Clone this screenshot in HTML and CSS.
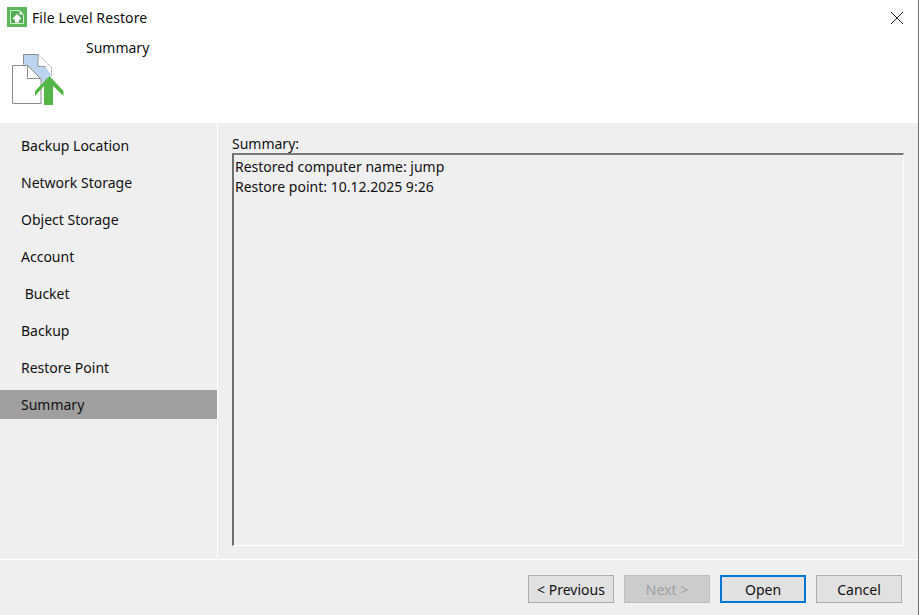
FILE: index.html
```html
<!DOCTYPE html>
<html lang="en">
<head>
<meta charset="utf-8">
<title>File Level Restore</title>
<link rel="stylesheet" href="styles.css">
</head>
<body>
<div class="window">
  <header class="header">
    <div class="titlebar">
      <svg class="app-icon" width="20" height="20" viewBox="0 0 20 20">
        <rect width="20" height="20" fill="#5cb85c"/>
        <path d="M3.500 3.500H12.500L16.500 7.500V16.500H3.500Z" fill="#52ad52" stroke="#d5edd5" stroke-width="1"/>
        <path d="M12.500 4V7.500H16Z" fill="#fff"/>
        <path d="M10 7L14 11V12.500H12V15.500H8V12.500H6V11Z" fill="#fff"/>
      </svg>
      <span class="title">File Level Restore</span>
      <svg class="close" width="14" height="14" viewBox="0 0 14 14">
        <path d="M1 1L13 13M13 1L1 13" stroke="#222" stroke-width="1" fill="none"/>
      </svg>
    </div>
    <div class="banner">
      <svg class="banner-icon" width="60" height="60" viewBox="0 0 60 60">
        <path d="M15.500 4.500H30L43.500 17.500V25L35 33L15.500 14.500Z" fill="#bcd4ee"/>
        <path d="M30 4.500V16.500H43" fill="#fff" stroke="#9a9a9a"/>
        <path d="M30 4.500L43.500 17.500V26" fill="#fff" stroke="#8c8c8c" stroke-dasharray="1 1"/>
        <path d="M15.500 14.500V4.500H30" fill="none" stroke="#8c8c8c"/>
        <path d="M4.500 15.500H19.500L33 29V53.500H4.500Z" fill="#fff" stroke="#8c8c8c"/>
        <path d="M19.500 15.500V28.500H32" fill="none" stroke="#8c8c8c"/>
        <path d="M41.500 26L55.500 41V46L45 36V55H36V36L27 46V41Z" fill="#55b648"/>
      </svg>
      <div class="step-name">Summary</div>
    </div>
  </header>
  <div class="body">
    <nav class="sidebar">
      <div class="nav-item">Backup Location</div>
      <div class="nav-item">Network Storage</div>
      <div class="nav-item">Object Storage</div>
      <div class="nav-item">Account</div>
      <div class="nav-item">&nbsp;Bucket</div>
      <div class="nav-item">Backup</div>
      <div class="nav-item">Restore Point</div>
      <div class="nav-item active">Summary</div>
    </nav>
    <main class="content">
      <label class="field-label">Summary:</label>
      <div class="summary-box">
        <div>Restored computer name: jump</div>
        <div>Restore point: 10.12.2025 9:26</div>
      </div>
    </main>
  </div>
  <footer class="footer">
    <button class="btn">&lt; Previous</button>
    <button class="btn disabled">Next &gt;</button>
    <button class="btn primary">Open</button>
    <button class="btn">Cancel</button>
  </footer>
</div>
</body>
</html>
```
FILE: styles.css
```css
* { box-sizing: border-box; }
html, body { margin: 0; padding: 0; }
body {
  width: 919px;
  height: 615px;
  overflow: hidden;
  font-family: "Noto Sans", "Open Sans", sans-serif;
  font-size: 14px;
  color: #111;
  background: #efefef;
}
.window {
  display: flex;
  flex-direction: column;
  height: 615px;
  border-right: 1px solid #6e6e6e;
}
.header { height: 123px; background: #fff; flex: none; padding: 7px 0 0 7px; }
.titlebar { display: flex; align-items: center; height: 20px; }
.app-icon { flex: none; }
.title { margin: 2px 0 0 5px; line-height: 20px; letter-spacing: 0.1px; }
.close { margin: 2px 14px 0 auto; }
.banner { display: flex; align-items: flex-start; }
.banner-icon { flex: none; margin: 23px 0 0 1px; }
.step-name { margin: 11px 0 0 18px; line-height: 20px; }
.body { flex: 1; display: flex; min-height: 0; }
.sidebar {
  width: 218px;
  flex: none;
  padding-top: 8px;
  display: flex;
  flex-direction: column;
  gap: 8px;
  border-right: 1px solid #fff;
}
.nav-item { height: 29px; line-height: 29px; padding-left: 21px; }
.nav-item.active { background: #a0a0a0; }
.content { flex: 1; display: flex; flex-direction: column; padding: 12px 14px 13px 14px; }
.field-label { line-height: 18px; height: 18px; }
.summary-box {
  flex: 1;
  border-style: solid;
  border-width: 2px 1px 1px 2px;
  border-color: #7a7a7a #fff #fff #6e6e6e;
  padding: 2px 1px;
  line-height: 20px;
}
.footer {
  height: 56px;
  flex: none;
  border-top: 1px solid #fff;
  display: flex;
  justify-content: flex-end;
  align-items: flex-start;
  gap: 10px;
  padding: 15px 16px 0 0;
}
.btn {
  width: 86px;
  height: 28px;
  background: #e1e1e1;
  border: 1px solid #adadad;
  font: inherit;
  color: #111;
  padding: 0;
}
.btn.disabled { background: #cccccc; color: #a0a0a0; border-color: #bfbfbf; }
.btn.primary { border: 2px solid #0078d7; }
```
